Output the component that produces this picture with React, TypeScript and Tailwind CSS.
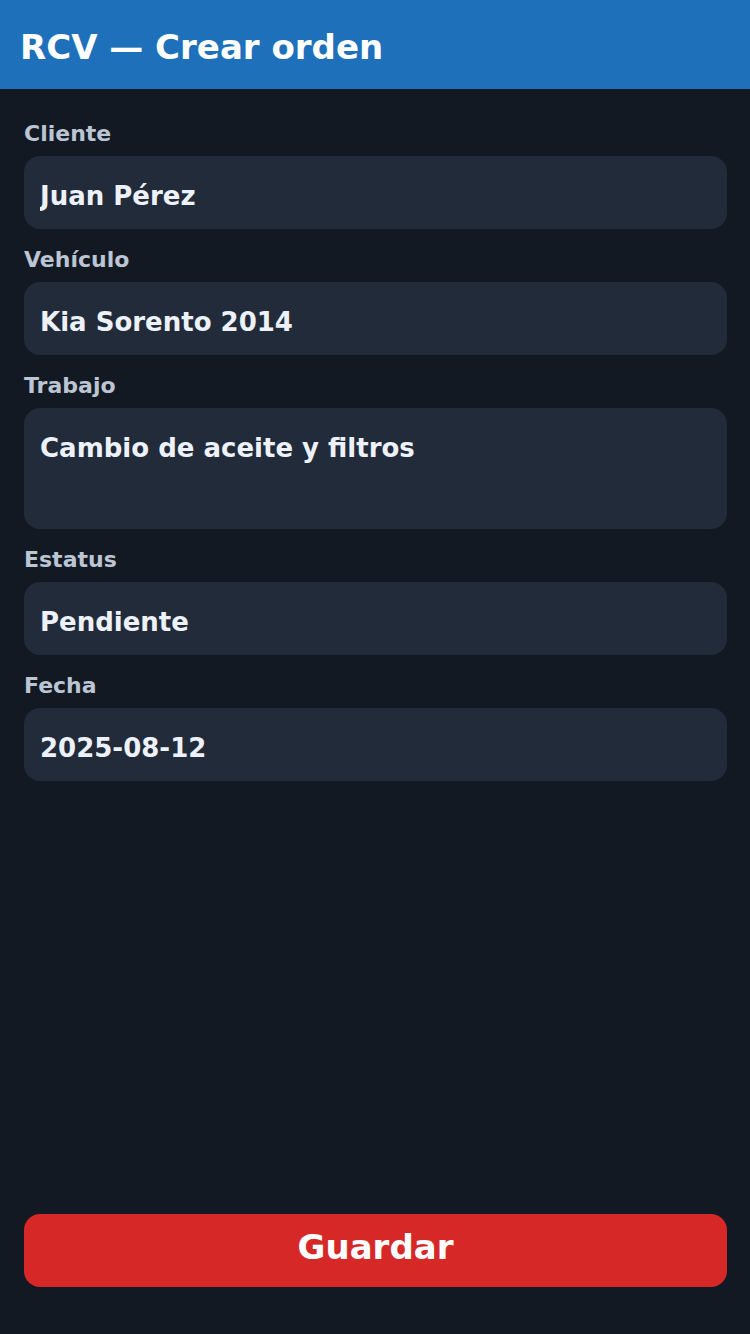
import React from 'react';

const fields = [
  { label: 'Cliente', value: 'Juan Pérez' },
  { label: 'Vehículo', value: 'Kia Sorento 2014' },
  { label: 'Trabajo', value: 'Cambio de aceite y filtros', multiline: true },
  { label: 'Estatus', value: 'Pendiente' },
  { label: 'Fecha', value: '2025-08-12' },
];

export default function App() {
  return (
    <div className="flex min-h-screen flex-col bg-[#131922] font-['DejaVu_Sans',sans-serif]">
      {/* Header */}
      <div className="flex h-[89px] items-center bg-[#1e70bb] px-5 pt-[6px]">
        <h1 className="text-[34px] font-bold text-white">RCV — Crear orden</h1>
      </div>

      {/* Form */}
      <div className="flex flex-col gap-[18px] pl-6 pr-[23px] pt-[32px]">
        {fields.map(f => (
          <div key={f.label} className="flex flex-col">
            <label className="mb-[9px] text-[22px] leading-[26px] font-bold text-[#bcc5d3]">
              {f.label}
            </label>
            {f.multiline ? (
              <textarea
                readOnly
                value={f.value}
                className="h-[121px] resize-none rounded-2xl bg-[#222b3a] px-4 pt-[25px] text-[26px] leading-[30px] font-bold text-[#edf1f9] outline-none"
              />
            ) : (
              <input
                readOnly
                value={f.value}
                className="h-[73px] rounded-2xl bg-[#222b3a] px-4 pt-[6px] text-[26px] font-bold text-[#edf1f9] outline-none"
              />
            )}
          </div>
        ))}
      </div>

      <div className="flex-1" />

      {/* Save button */}
      <div className="pl-6 pr-[23px] pb-[47px]">
        <button className="flex h-[73px] w-full items-start justify-center rounded-2xl bg-[#d72828] pt-[8px] text-[34px] font-bold text-white">
          Guardar
        </button>
      </div>
    </div>
  );
}
